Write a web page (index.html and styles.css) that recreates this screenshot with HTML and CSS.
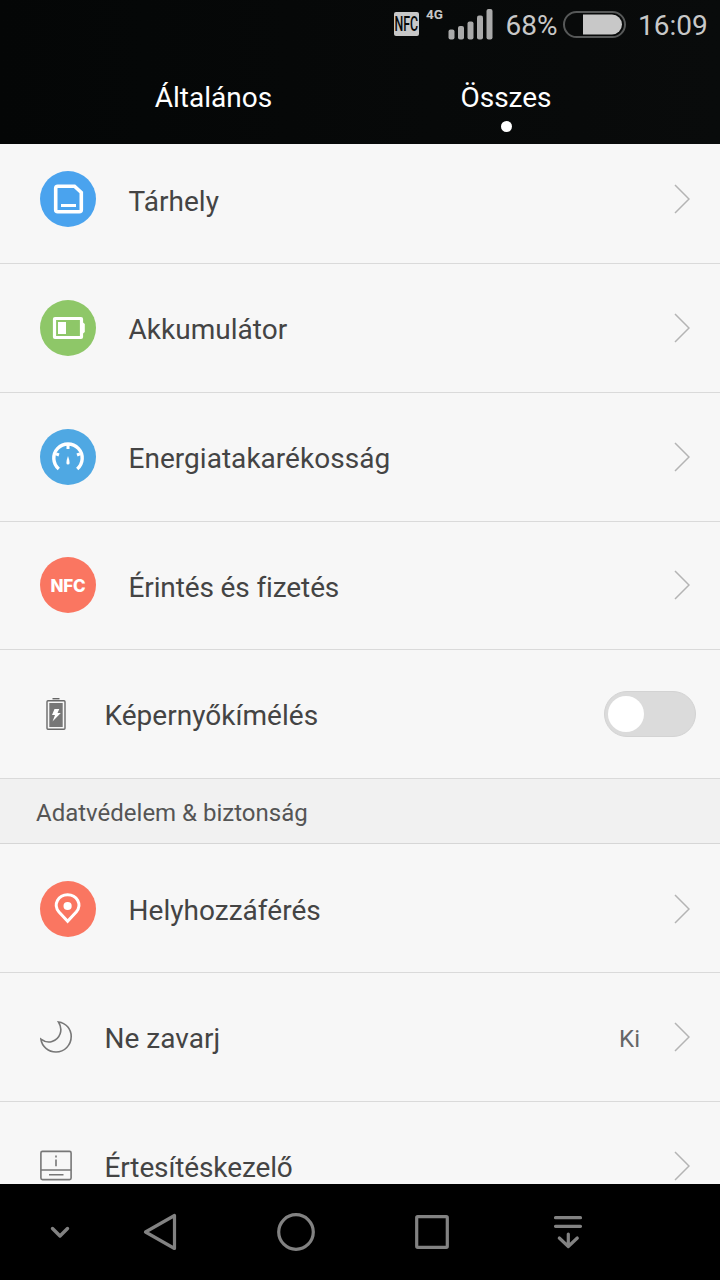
FILE: index.html
```html
<!DOCTYPE html>
<html lang="hu">
<head>
  <meta charset="UTF-8" />
  <meta name="viewport" content="width=device-width, initial-scale=1.0"/>
  <title>Beállítások</title>
  <link rel="stylesheet" href="styles.css">
</head>
<body>
  <div class="phone">
    <header class="header">
      <div class="status-bar">
        <span class="nfc-badge"><span class="nfc-text">NFC</span></span>
        <span class="network">4G</span>
        <svg class="signal" width="45" height="32" viewBox="0 0 45 32">
          <rect x="0.5" y="21.5" width="6" height="10" rx="2"/>
          <rect x="10" y="18" width="6" height="13.5" rx="2"/>
          <rect x="19.5" y="13.5" width="6" height="18" rx="2"/>
          <rect x="29" y="7.5" width="6" height="24" rx="2"/>
          <rect x="38.5" y="1" width="6" height="30.5" rx="2"/>
        </svg>
        <span class="percent">68%</span>
        <svg class="battery" width="63" height="28" viewBox="0 0 63 28">
          <rect x="1" y="1" width="61" height="25" rx="12.5" fill="none" stroke="#565858" stroke-width="2"/>
          <path d="M20 3.5h29a10 10 0 0 1 0 20H20z" fill="#c8c8c8"/>
        </svg>
        <span class="clock">16:09</span>
      </div>
      <nav class="tabs">
        <a class="tab">Általános</a>
        <a class="tab active">Összes</a>
      </nav>
    </header>

    <main class="list">
      <div class="row first">
        <svg class="icon" width="56" height="56" viewBox="0 0 56 56">
          <circle cx="28" cy="28" r="28" fill="#4aa3ee"/>
          <path d="M17.8 15.2H34.5L41.3 21.5V38.8Q41.3 40.8 39.3 40.8H17.7Q15.7 40.8 15.7 38.8V17.2Q15.7 15.2 17.8 15.2Z" fill="none" stroke="#fff" stroke-width="3.6"/>
          <path d="M21 34.5H36" stroke="#fff" stroke-width="3"/>
        </svg>
        <span class="label">Tárhely</span>
        <svg class="chevron" width="16" height="30" viewBox="0 0 16 30"><path d="M1 1L15 15L1 29"/></svg>
      </div>
      <div class="row">
        <svg class="icon" width="56" height="56" viewBox="0 0 56 56">
          <circle cx="28" cy="28" r="28" fill="#8ec768"/>
          <rect x="14.5" y="18.5" width="27" height="19" rx="0.5" fill="none" stroke="#fff" stroke-width="3.2"/>
          <rect x="18" y="22" width="8" height="12" fill="#fff"/>
          <path d="M43 22.5L44.8 24V32L43 33.5Z" fill="#fff"/>
        </svg>
        <span class="label">Akkumulátor</span>
        <svg class="chevron" width="16" height="30" viewBox="0 0 16 30"><path d="M1 1L15 15L1 29"/></svg>
      </div>
      <div class="row">
        <svg class="icon" width="56" height="56" viewBox="0 0 56 56">
          <circle cx="28" cy="28" r="28" fill="#4fa8e3"/>
          <path d="M18.8 40A14.2 14.2 0 1 1 37.2 40" fill="none" stroke="#fff" stroke-width="3.4"/>
          <path d="M28 15V20M16 24.8L19 26M40 24.8L37 26" stroke="#fff" stroke-width="3"/>
          <path d="M28 27Q29.6 31 29.6 34A1.6 1.6 0 0 1 26.4 34Q26.4 31 28 27Z" fill="#fff"/>
        </svg>
        <span class="label">Energiatakarékosság</span>
        <svg class="chevron" width="16" height="30" viewBox="0 0 16 30"><path d="M1 1L15 15L1 29"/></svg>
      </div>
      <div class="row">
        <span class="icon nfc-icon"><span class="nfc-word">NFC</span></span>
        <span class="label tight">Érintés és fizetés</span>
        <svg class="chevron" width="16" height="30" viewBox="0 0 16 30"><path d="M1 1L15 15L1 29"/></svg>
      </div>
      <div class="row">
        <svg class="small-icon" width="32" height="32" viewBox="0 0 32 32">
          <path d="M12.5 0.7H19.5" stroke="#666" stroke-width="1.4"/>
          <rect x="7" y="2.8" width="18" height="28.5" rx="1" fill="#f7f7f7" stroke="#6a6a6a" stroke-width="1.4"/>
          <rect x="9.3" y="5" width="13.4" height="24" fill="#777"/>
          <path d="M14.5 11H19.3L17.5 15H20.8L12.5 23.5L15 17.1H12Z" fill="#fff"/>
        </svg>
        <span class="label">Képernyőkímélés</span>
        <span class="switch"><span class="knob"></span></span>
      </div>

      <div class="section">Adatvédelem &amp; biztonság</div>

      <div class="row">
        <svg class="icon" width="56" height="56" viewBox="0 0 56 56">
          <circle cx="28" cy="28" r="28" fill="#fa7661"/>
          <path d="M27.6 40.3L19 31C12.5 23.5 18.5 13.7 27.6 13.7S42.7 23.5 36.2 31Z" fill="none" stroke="#fff" stroke-width="3"/>
          <circle cx="27.6" cy="25" r="4.1" fill="#fff"/>
        </svg>
        <span class="label">Helyhozzáférés</span>
        <svg class="chevron" width="16" height="30" viewBox="0 0 16 30"><path d="M1 1L15 15L1 29"/></svg>
      </div>
      <div class="row">
        <svg class="small-icon line" width="32" height="32" viewBox="0 0 32 32">
          <path d="M18.5 1C26 2 31.2 8 31.2 15.5C31.2 24 24.5 31 16 31C8.5 31 1.8 25.5 0.9 18.2C4 20.5 8 21.8 12 20.5C20 18 23.5 9 18.5 1Z"/>
        </svg>
        <span class="label">Ne zavarj</span>
        <span class="value">Ki</span>
        <svg class="chevron" width="16" height="30" viewBox="0 0 16 30"><path d="M1 1L15 15L1 29"/></svg>
      </div>
      <div class="row">
        <svg class="small-icon line" width="32" height="32" viewBox="0 0 32 32">
          <rect x="0.9" y="1.4" width="30.2" height="28.2" rx="1.5"/>
          <path d="M1 20H31M9 24.7H23.5M16 9.5V16.3M16 5.5V7.5"/>
        </svg>
        <span class="label tight">Értesítéskezelő</span>
        <svg class="chevron" width="16" height="30" viewBox="0 0 16 30"><path d="M1 1L15 15L1 29"/></svg>
      </div>
    </main>

    <footer class="nav-bar">
      <svg width="720" height="96" viewBox="0 0 720 96">
        <path d="M52.5 44.5L60 52L67.5 44.5" stroke-width="3.4"/>
        <path d="M174.5 31.5V64.5L145.5 48Z"/>
        <circle cx="296" cy="48" r="17.3"/>
        <rect x="416.7" y="32.7" width="30.6" height="30.6" rx="1"/>
        <path d="M555.5 33.7H580.5M555.5 42.3H580.5M568.3 50V61M559.3 54L568.3 62.5L577.3 54"/>
      </svg>
    </footer>
  </div>
</body>
</html>
```
FILE: styles.css
```css
body {
  margin: 0;
  font-family: Roboto, 'Noto Sans', sans-serif;
  font-variant-ligatures: none;
  background: #000;
}
.phone {
  display: flex;
  flex-direction: column;
  width: 720px;
  height: 1280px;
  overflow: hidden;
}
.header {
  height: 144px;
  background: linear-gradient(90deg, #040606, #090b0b);
}
.status-bar {
  display: flex;
  height: 48px;
  padding-left: 394px;
  color: #c8c8c8;
}
.nfc-badge {
  width: 25px;
  height: 24px;
  margin-top: 12px;
  border-radius: 2px;
  background: #c8c8c8;
  color: #070909;
  overflow: hidden;
}
.nfc-text {
  display: block;
  width: 36px;
  font-size: 21px;
  font-weight: 500;
  line-height: 25px;
  transform: scaleX(0.59);
  transform-origin: 1px 0;
}
.network {
  width: 22px;
  margin: 6px 0 0 7px;
  font-size: 13.5px;
  font-weight: bold;
  line-height: 16px;
}
.signal {
  margin-top: 8px;
  fill: #aaa;
}
.percent {
  width: 57px;
  margin-left: 12.5px;
  margin-right: 0.5px;
  font-size: 28px;
  line-height: 51px;
}
.battery {
  margin-top: 11px;
}
.clock {
  margin-left: 12px;
  font-size: 28px;
  line-height: 51px;
}
.tabs {
  display: grid;
  grid-template-columns: 293px 292px;
  height: 96px;
  padding-left: 67px;
}
.tab {
  display: flex;
  flex-direction: column;
  align-items: center;
  color: #fff;
  font-size: 28px;
  line-height: 33px;
  padding-top: 33px;
}
.tab.active::after {
  content: '';
  width: 11px;
  height: 11px;
  margin-top: 7px;
  border-radius: 50%;
  background: #fff;
}
.list {
  flex: 1;
  min-height: 0;
  overflow: hidden;
  background: #f7f7f7;
}
.row {
  display: flex;
  align-items: center;
  box-sizing: border-box;
  height: 128.67px;
  padding: 0 30px 0 40px;
  border-bottom: 1px solid #dadada;
}
.row.first {
  margin-top: -8.4px;
}
.section ~ .row {
  padding-top: 1px;
}
.icon {
  flex: none;
  width: 56px;
  height: 56px;
  margin-right: 32px;
}
.label {
  flex: 1;
  padding: 3.6px 0 0 0.5px;
  color: #444;
  font-size: 28px;
  line-height: 33px;
  letter-spacing: 0.03px;
  white-space: nowrap;
}
.label.tight {
  letter-spacing: -0.12px;
}
.chevron {
  fill: none;
  stroke: #b4b4b4;
  stroke-width: 1.5;
}
.nfc-icon {
  display: flex;
  align-items: center;
  justify-content: center;
  border-radius: 50%;
  background: #fa7661;
}
.nfc-word {
  padding-top: 1px;
  color: #fff;
  font-family: Inter, sans-serif;
  font-size: 17px;
  font-weight: 800;
  letter-spacing: -0.2px;
}
.small-icon {
  flex: none;
  margin-right: 32px;
}
.line {
  fill: none;
  stroke: #777;
  stroke-width: 1.6;
}
.switch {
  box-sizing: border-box;
  width: 92px;
  height: 46px;
  margin-right: -6px;
  padding: 4px 3px;
  border: 1px solid #d3d3d3;
  border-radius: 23px;
  background: #dbdbdb;
}
.knob {
  display: block;
  width: 36px;
  height: 36px;
  border-radius: 50%;
  background: #fff;
}
.section {
  box-sizing: border-box;
  height: 65.3px;
  padding-left: 36px;
  border-bottom: 1px solid #d6d6d6;
  background: #f1f1f1;
  color: #555;
  font-size: 24px;
  line-height: 69px;
}
.value {
  margin-right: 34px;
  padding-top: 3px;
  color: #666;
  font-size: 24px;
}
.nav-bar {
  height: 96px;
  background: #000;
}
.nav-bar svg {
  display: block;
  fill: none;
  stroke: #828282;
  stroke-width: 3.2;
  stroke-linecap: round;
  stroke-linejoin: round;
}
```
